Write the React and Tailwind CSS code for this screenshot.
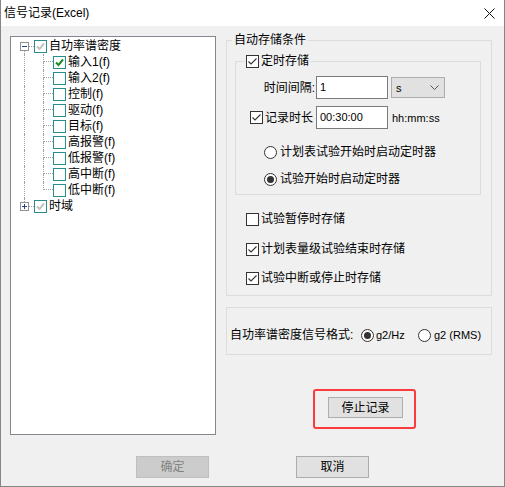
import React from 'react';

const DOT = 'border-dotted border-[#a0a0a0]';

function WinCheck({ checked }) {
  return (
    <span className="w-[13px] h-[13px] shrink-0 border border-[#333333] bg-white flex items-center justify-center">
      {checked && (
        <svg width="11" height="11" viewBox="0 0 11 11">
          <path d="M1.5 5.5 L4 8 L9.5 2.5" fill="none" stroke="#333333" strokeWidth="1.1" />
        </svg>
      )}
    </span>
  );
}

function Radio({ checked }) {
  return (
    <span className="w-[13px] h-[13px] shrink-0 rounded-full border border-[#333333] bg-white flex items-center justify-center">
      {checked && <span className="w-[7px] h-[7px] rounded-full bg-[#333333]" />}
    </span>
  );
}

function TreeCheck({ mark }) {
  return (
    <span className="w-[13px] h-[13px] shrink-0 border border-[#2b8c8c] bg-white flex items-center justify-center">
      {mark && (
        <svg width="11" height="11" viewBox="0 0 11 11">
          <path
            d="M2 5.5 L4.5 8 L9 2.5"
            fill="none"
            stroke={mark === 'green' ? '#1f8b24' : '#c4c4c4'}
            strokeWidth="2"
          />
        </svg>
      )}
    </span>
  );
}

function Expander({ open }) {
  return (
    <span className="w-[9px] h-[9px] shrink-0 border border-[#919191] bg-white flex items-center justify-center">
      <svg width="7" height="7" viewBox="0 0 7 7">
        <path d={open ? 'M1 3.5 H6' : 'M1 3.5 H6 M3.5 1 V6'} stroke="#2a3f8f" strokeWidth="1" />
      </svg>
    </span>
  );
}

const children = ['输入1(f)', '输入2(f)', '控制(f)', '驱动(f)', '目标(f)', '高报警(f)', '低报警(f)', '高中断(f)', '低中断(f)'];

function Tree() {
  return (
    <div className="mt-[10px] ml-[9px] w-[206px] h-[399px] shrink-0 border border-[#828790] bg-white pt-[1px]">
      {/* root node */}
      <div className="h-[16px] flex items-stretch">
        <span className="w-[9px] shrink-0" />
        <span className="w-[9px] shrink-0 flex flex-col items-center">
          <span className="h-[4px]" />
          <Expander open />
          <span className={`flex-1 w-0 border-l ${DOT}`} />
        </span>
        <span className="w-[5px] shrink-0 flex items-center">
          <span className={`w-full h-0 border-t ${DOT}`} />
        </span>
        <span className="flex items-center">
          <TreeCheck mark="gray" />
        </span>
        <span className="ml-[2px] flex items-center">自功率谱密度</span>
      </div>

      {children.map((name, i) => (
        <div key={name} className="h-[16px] flex items-stretch">
          <span className="w-[13px] shrink-0" />
          <span className={`w-[19px] shrink-0 border-l ${DOT}`} />
          <span className="w-[10px] shrink-0 flex flex-col">
            <span className={`h-[8px] border-l border-b ${DOT}`} />
            <span className={i === children.length - 1 ? 'flex-1' : `flex-1 border-l ${DOT}`} />
          </span>
          <span className="flex items-center">
            <TreeCheck mark={i === 0 ? 'green' : null} />
          </span>
          <span className="ml-[2px] flex items-center">{name}</span>
        </div>
      ))}

      {/* time domain node */}
      <div className="h-[16px] flex items-stretch">
        <span className="w-[9px] shrink-0" />
        <span className="w-[9px] shrink-0 flex flex-col items-center">
          <span className={`h-[4px] w-0 border-l ${DOT}`} />
          <Expander />
        </span>
        <span className="w-[5px] shrink-0 flex items-center">
          <span className={`w-full h-0 border-t ${DOT}`} />
        </span>
        <span className="flex items-center">
          <TreeCheck mark="gray" />
        </span>
        <span className="ml-[2px] flex items-center">时域</span>
      </div>
    </div>
  );
}

function CheckRow({ checked, label, className = '' }) {
  return (
    <div className={`h-[16px] ml-[19px] flex items-center gap-[2px] ${className}`}>
      <WinCheck checked={checked} />
      <span>{label}</span>
    </div>
  );
}

function RadioRow({ checked, label, className = '' }) {
  return (
    <div className={`h-[16px] pl-[28px] flex items-center gap-[3px] ${className}`}>
      <Radio checked={checked} />
      <span>{label}</span>
    </div>
  );
}

export default function App() {
  return (
    <div className="w-[505px] h-[487px] flex flex-col bg-[#f0f0f0] border-x border-b border-[#868686] text-[12px] leading-[16px] text-black font-['Liberation_Sans','Noto_Sans_CJK_SC',sans-serif] select-none">
      {/* Title bar */}
      <div className="h-[26px] shrink-0 bg-white flex items-center pl-[3px] pr-[9px]">
        <span>信号记录(Excel)</span>
        <svg className="ml-auto" width="11" height="11" viewBox="0 0 11 11">
          <path d="M0.5 0.5 L10.5 10.5 M10.5 0.5 L0.5 10.5" stroke="#111111" strokeWidth="1" />
        </svg>
      </div>

      {/* Body */}
      <div className="flex h-[409px] shrink-0">
        <Tree />

        <div className="ml-[10px] w-[266px] flex flex-col">
          {/* 自动存储条件 */}
          <div className="mt-[14px] border border-[#dcdcdc] flex flex-col pb-[9px]">
            <span className="-mt-[9px] ml-[5px] self-start px-[2px] bg-[#f0f0f0]">自动存储条件</span>

            {/* 定时存储 */}
            <div className="mt-[13px] ml-[8px] w-[246px] border border-[#dcdcdc] flex flex-col pb-[7px]">
              <div className="-mt-[9px] ml-[9px] self-start pl-[1px] pr-[2px] bg-[#f0f0f0] h-[16px] flex items-center gap-[2px]">
                <WinCheck checked />
                <span>定时存储</span>
              </div>

              <div className="mt-[7px] h-[23px] flex items-center">
                <span className="w-[80px] shrink-0 text-right pr-[1px]">时间间隔:</span>
                <div className="w-[72px] h-[23px] border border-[#7a7a7a] bg-white flex items-center pl-[3px] pb-[2px] text-[11px]">1</div>
                <div className="ml-[3px] w-[54px] h-[21px] border border-[#adadad] bg-[#e1e1e1] flex items-center pl-[4px] pr-[5px] text-[11px]">
                  <span>s</span>
                  <svg className="ml-auto" width="9" height="5" viewBox="0 0 9 5">
                    <path d="M0.5 0.5 L4.5 4.5 L8.5 0.5" fill="none" stroke="#555555" strokeWidth="1" />
                  </svg>
                </div>
              </div>

              <div className="mt-[7px] h-[23px] flex items-center">
                <span className="w-[80px] shrink-0 pl-[14px] flex items-center gap-[2px]">
                  <WinCheck checked />
                  <span>记录时长</span>
                </span>
                <div className="w-[72px] h-[23px] border border-[#7a7a7a] bg-white flex items-center pl-[3px] pb-[2px] text-[11px]">00:30:00</div>
                <span className="ml-[4px] text-[11px]">hh:mm:ss</span>
              </div>

              <RadioRow className="mt-[15px]" label="计划表试验开始时启动定时器" />
              <RadioRow className="mt-[11px]" checked label="试验开始时启动定时器" />
            </div>

            <CheckRow className="mt-[16px]" label="试验暂停时存储" />
            <CheckRow className="mt-[14px]" checked label="计划表量级试验结束时存储" />
            <CheckRow className="mt-[13px]" checked label="试验中断或停止时存储" />
          </div>

          {/* 信号格式 */}
          <div className="mt-[11px] border border-[#dcdcdc] pt-[19px] pb-[11px] pl-[3px]">
            <div className="h-[16px] flex items-center">
              <span className="w-[131px] shrink-0">自功率谱密度信号格式:</span>
              <Radio checked />
              <span className="ml-[2px] w-[42px] text-[11px]">g2/Hz</span>
              <Radio />
              <span className="ml-[3px] text-[11px]">g2 (RMS)</span>
            </div>
          </div>

          {/* Stop */}
          <div className="mt-[34px] ml-[87px] w-[103px] h-[40px] border-2 border-[#fa3c3c] rounded-[3px] pt-[6px] pl-[13px]">
            <button className="w-[75px] h-[21px] border border-[#adadad] bg-[#e1e1e1] flex items-center justify-center">
              停止记录
            </button>
          </div>
        </div>
      </div>

      {/* Footer */}
      <div className="mt-[21px] pl-[135px] flex">
        <button disabled className="w-[73px] h-[22px] border border-[#bfbfbf] bg-[#cccccc] text-[#838383] flex items-center justify-center">
          确定
        </button>
        <button className="ml-[87px] w-[73px] h-[22px] border border-[#adadad] bg-[#e1e1e1] flex items-center justify-center">
          取消
        </button>
      </div>
    </div>
  );
}
